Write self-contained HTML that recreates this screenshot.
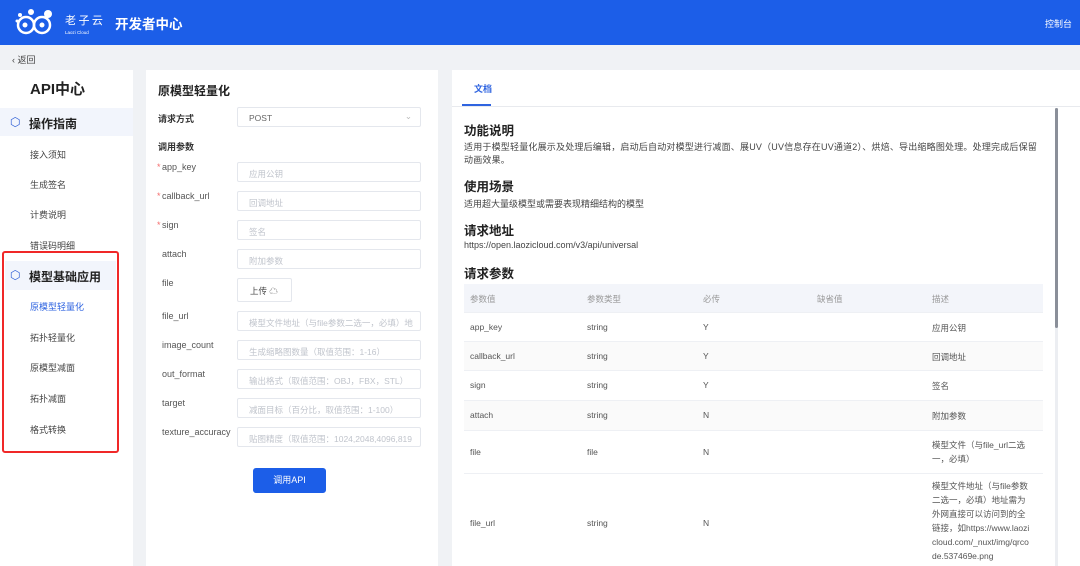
<!DOCTYPE html>
<html><head><meta charset="utf-8">
<style>
*{margin:0;padding:0;box-sizing:border-box}
html,body{width:1080px;height:566px;overflow:hidden}
body{background:#f0f2f5;font-family:"Liberation Sans","Noto Sans CJK SC",sans-serif;color:#333;position:relative;font-size:9px}
.a{position:absolute}
.hdr{left:0;top:0;width:1080px;height:45px;background:#1c5ee8}
.inp{position:absolute;left:237px;width:184px;height:20px;border:1px solid #e4e7ed;border-radius:2px;color:#c0c4cc;font-size:8.5px;padding:5px 11px;white-space:nowrap;overflow:hidden}
.lbl{position:absolute;left:162px;font-size:9px;color:#555}
.st{color:#f56c6c;position:absolute;left:-5px}
.si{position:absolute;left:30px;font-size:9px;color:#444}
.h{position:absolute;left:464px;font-size:12.5px;font-weight:bold;color:#222}
.t{position:absolute;left:464px;font-size:9px;color:#444}
.row{position:absolute;left:464px;width:579px;border-bottom:1px solid #eef0f4;font-size:8.5px;color:#555}
.row span{position:absolute}
</style></head><body>
<div class="a hdr"></div>
<svg class="a" style="left:14px;top:6px" width="92" height="32" viewBox="0 0 92 32">
<g fill="none" stroke="#fff" stroke-width="2.5"><circle cx="12" cy="19" r="8"/><circle cx="28" cy="19" r="8"/></g>
<g fill="#fff"><circle cx="11" cy="19" r="2.5"/><circle cx="28" cy="19" r="2.5"/><circle cx="6" cy="9" r="2"/><circle cx="17" cy="6" r="3"/><circle cx="34" cy="8" r="4"/><circle cx="3" cy="15" r="1.5"/></g>
<text x="51" y="18" fill="#fff" font-size="11" font-family="Noto Sans CJK SC,sans-serif">老 子 云</text>
<text x="51" y="28" fill="#fff" font-size="4.5" font-family="Liberation Sans,sans-serif">Laozi Cloud</text>
</svg>
<div class="a" style="left:115px;top:13px;color:#fff;font-size:13.5px;font-weight:bold">开发者中心</div>
<div class="a" style="left:1045px;top:17px;color:#fff;font-size:9px">控制台</div>
<div class="a" style="left:12px;top:53px;font-size:9px;color:#444">‹ 返回</div>

<div class="a" style="left:0;top:70px;width:133px;height:496px;background:#fff"></div>
<div class="a" style="left:30px;top:78px;font-size:15px;font-weight:bold;color:#222">API中心</div>
<div class="a" style="left:0;top:108px;width:133px;height:28px;background:#f2f5fc"></div>
<div class="a" style="left:10px;top:115px;color:#2f5fd6;font-size:12px">⬡</div>
<div class="a" style="left:29px;top:115px;font-size:12px;font-weight:bold;color:#222">操作指南</div>
<div class="si" style="top:148px">接入须知</div>
<div class="si" style="top:178px">生成签名</div>
<div class="si" style="top:208px">计费说明</div>
<div class="si" style="top:239px">错误码明细</div>
<div class="a" style="left:5px;top:261px;width:111px;height:29px;background:#f2f5fc"></div>
<div class="a" style="left:10px;top:268px;color:#2f5fd6;font-size:12px">⬡</div>
<div class="a" style="left:29px;top:268px;font-size:12px;font-weight:bold;color:#222">模型基础应用</div>
<div class="si" style="top:300px;color:#2f64e0">原模型轻量化</div>
<div class="si" style="top:331px">拓扑轻量化</div>
<div class="si" style="top:361px">原模型减面</div>
<div class="si" style="top:392px">拓扑减面</div>
<div class="si" style="top:423px">格式转换</div>
<div class="a" style="left:2px;top:251px;width:117px;height:202px;border:2.5px solid #f02828;border-radius:3px"></div>

<div class="a" style="left:146px;top:70px;width:292px;height:496px;background:#fff"></div>
<div class="a" style="left:158px;top:82px;font-size:12px;font-weight:bold;color:#222">原模型轻量化</div>
<div class="a" style="left:158px;top:112px;font-size:9px;font-weight:bold;color:#333">请求方式</div>
<div class="inp" style="top:107px;color:#666">POST<span style="position:absolute;right:8px;top:3px;color:#bbb">⌄</span></div>
<div class="a" style="left:158px;top:140px;font-size:9px;font-weight:bold;color:#333">调用参数</div>
<div class="lbl" style="top:162px"><span class="st">*</span>app_key</div><div class="inp" style="top:162px">应用公钥</div>
<div class="lbl" style="top:191px"><span class="st">*</span>callback_url</div><div class="inp" style="top:191px">回调地址</div>
<div class="lbl" style="top:220px"><span class="st">*</span>sign</div><div class="inp" style="top:220px">签名</div>
<div class="lbl" style="top:249px">attach</div><div class="inp" style="top:249px">附加参数</div>
<div class="lbl" style="top:278px">file</div><div class="inp" style="top:278px;width:55px;height:24px;color:#444;padding:6px 12px">上传 ☁</div>
<div class="lbl" style="top:311px">file_url</div><div class="inp" style="top:311px">模型文件地址（与file参数二选一，必填）地</div>
<div class="lbl" style="top:340px">image_count</div><div class="inp" style="top:340px">生成缩略图数量（取值范围：1-16）</div>
<div class="lbl" style="top:369px">out_format</div><div class="inp" style="top:369px">输出格式（取值范围：OBJ，FBX，STL）</div>
<div class="lbl" style="top:398px">target</div><div class="inp" style="top:398px">减面目标（百分比，取值范围：1-100）</div>
<div class="lbl" style="top:427px">texture_accuracy</div><div class="inp" style="top:427px">贴图精度（取值范围：1024,2048,4096,819</div>
<div class="a" style="left:253px;top:468px;width:73px;height:25px;background:#1c5ee8;border-radius:3px;color:#fff;font-size:9px;text-align:center;line-height:25px">调用API</div>

<div class="a" style="left:452px;top:70px;width:628px;height:496px;background:#fff;overflow:hidden">
<div class="a" style="left:22px;top:12px;font-size:9px;color:#2f64e0;font-weight:bold">文档</div>
<div class="a" style="left:0;top:36px;width:628px;height:1px;background:#e8eaee"></div>
<div class="a" style="left:10px;top:34px;width:29px;height:2px;background:#2f64e0"></div>
</div>
<div class="a" style="left:452px;top:70px;width:628px;height:496px;overflow:hidden">
<div style="position:absolute;left:-452px;top:-70px;width:1080px;height:566px">
<div class="h" style="top:120px">功能说明</div>
<div class="t" style="top:141px;width:578px;line-height:13px;letter-spacing:0.2px">适用于模型轻量化展示及处理后编辑，启动后自动对模型进行减面、展UV（UV信息存在UV通道2）、烘焙、导出缩略图处理。处理完成后保留动画效果。</div>
<div class="h" style="top:176px">使用场景</div>
<div class="t" style="top:197px">适用超大量级模型或需要表现精细结构的模型</div>
<div class="h" style="top:220px">请求地址</div>
<div class="t" style="top:240px">https://open.laozicloud.com/v3/api/universal</div>
<div class="h" style="top:263px">请求参数</div>
<div class="row" style="top:284px;height:29px;background:#f3f5fa;color:#999"><span style="left:6px;top:9px">参数值</span><span style="left:123px;top:9px">参数类型</span><span style="left:239px;top:9px">必传</span><span style="left:353px;top:9px">缺省值</span><span style="left:468px;top:9px">描述</span></div>
<div class="row" style="top:313px;height:29px"><span style="left:6px;top:9px">app_key</span><span style="left:123px;top:9px">string</span><span style="left:239px;top:9px">Y</span><span style="left:468px;top:9px">应用公钥</span></div>
<div class="row" style="top:342px;height:29px;background:#fafafa"><span style="left:6px;top:9px">callback_url</span><span style="left:123px;top:9px">string</span><span style="left:239px;top:9px">Y</span><span style="left:468px;top:9px">回调地址</span></div>
<div class="row" style="top:371px;height:30px"><span style="left:6px;top:9px">sign</span><span style="left:123px;top:9px">string</span><span style="left:239px;top:9px">Y</span><span style="left:468px;top:9px">签名</span></div>
<div class="row" style="top:401px;height:30px;background:#fafafa"><span style="left:6px;top:9px">attach</span><span style="left:123px;top:9px">string</span><span style="left:239px;top:9px">N</span><span style="left:468px;top:9px">附加参数</span></div>
<div class="row" style="top:431px;height:43px"><span style="left:6px;top:16px">file</span><span style="left:123px;top:16px">file</span><span style="left:239px;top:16px">N</span><span style="left:468px;top:7px;width:100px;line-height:14px">模型文件（与file_url二选一，必填）</span></div>
<div class="row" style="top:474px;height:100px;border:none"><span style="left:6px;top:44px">file_url</span><span style="left:123px;top:44px">string</span><span style="left:239px;top:44px">N</span><span style="left:468px;top:5px;width:100px;line-height:14px;word-break:break-all">模型文件地址（与file参数二选一，必填）地址需为外网直接可以访问到的全链接，如https://www.laozicloud.com/_nuxt/img/qrcode.537469e.png</span></div>
</div></div>
<div class="a" style="left:1055px;top:108px;width:3px;height:458px;background:#eceef2"></div>
<div class="a" style="left:1055px;top:108px;width:3px;height:220px;background:#8a8f99;border-radius:2px"></div>
</body></html>
